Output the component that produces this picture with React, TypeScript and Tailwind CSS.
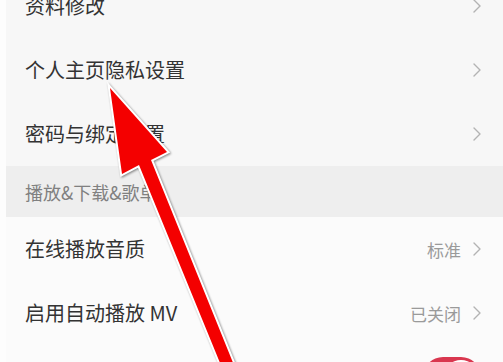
import React from "react";

const font = { fontFamily: '"Noto Sans CJK SC", "Noto Sans", sans-serif' };

const topRows = [{ label: "资料修改" }, { label: "个人主页隐私设置" }, { label: "密码与绑定设置" }];

const playRows = [
  { label: "在线播放音质", value: "标准" },
  { label: "启用自动播放 MV", value: "已关闭" },
];

function Chevron() {
  return (
    <svg width="10" height="16" viewBox="0 0 10 16" className="shrink-0">
      <path d="M2 2 L8 8 L2 14" fill="none" stroke="#b3b3b3" strokeWidth="1.4" strokeLinecap="round" strokeLinejoin="round" />
    </svg>
  );
}

function Row({ label, value, bg }: { label: string; value?: string; bg: string }) {
  return (
    <div className={`h-[64px] flex items-center justify-between pl-[19px] pr-[21px] ${bg}`}>
      <span className="text-[20px] text-[#333333] leading-none">{label}</span>
      <div className="flex items-center gap-[11px]">
        {value && <span className="text-[17px] text-[#9a9a9a] leading-none">{value}</span>}
        <Chevron />
      </div>
    </div>
  );
}

export default function App() {
  return (
    <div className="relative w-[503px] h-[362px] overflow-hidden bg-[#fdfdfd]" style={font}>
      <div className="ml-[6px] -mt-[26px]">
        {/* Account rows */}
        {topRows.map((r, i) => (
          <Row key={i} label={r.label} bg="bg-[#f7f7f7]" />
        ))}

        {/* Section header */}
        <div className="h-[51px] bg-[#eeeeee] flex items-center pl-[19px]">
          <span className="text-[18px] text-[#808080] leading-none">播放&amp;下载&amp;歌单</span>
        </div>

        {playRows.map((r, i) => (
          <Row key={i} label={r.label} value={r.value} bg="bg-[#fbfbfb]" />
        ))}

        {/* Toggle row */}
        <div className="h-[64px] flex items-center justify-end pr-[22px] bg-[#fbfbfb]">
          <div className="w-[58px] h-[40px] rounded-full bg-[#d9374f] flex items-center justify-end pr-[3px]">
            <div className="w-[34px] h-[34px] rounded-full bg-white" />
          </div>
        </div>
      </div>

      {/* Red annotation arrow */}
      <svg className="absolute inset-0" width="503" height="362" viewBox="0 0 503 362">
        <polygon
          points="110,88 167,152 151,160 240,380 227,380 139,165 122,174"
          fill="#f40000"
          stroke="#ffffff"
          strokeWidth="4"
          strokeLinejoin="miter"
          paintOrder="stroke"
          style={{ filter: "drop-shadow(1.5px 1px 1px rgba(0,0,0,0.45))" }}
        />
      </svg>
    </div>
  );
}
